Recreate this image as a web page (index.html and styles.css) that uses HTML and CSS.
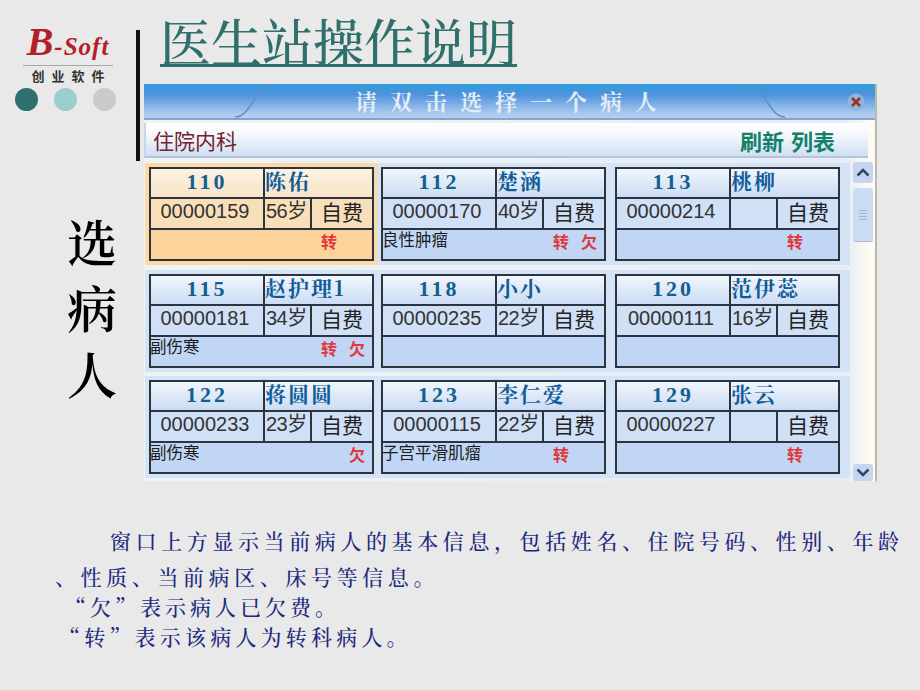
FILE: index.html
```html
<!DOCTYPE html>
<html lang="zh-CN">
<head>
<meta charset="utf-8">
<title>医生站操作说明</title>
<link rel="stylesheet" href="styles.css">
</head>
<body>
<div class="slide">
  <div class="top">
    <aside class="aside">
      <div class="logo">
        <div class="brand"><span class="brand-b">B</span>-Soft</div>
        <div class="brand-cn">创业软件</div>
      </div>
      <div class="dots"><i class="dot dot-a"></i><i class="dot dot-b"></i><i class="dot dot-c"></i></div>
      <div class="vtext"><span>选</span><span>病</span><span>人</span></div>
    </aside>
    <div class="rule"></div>
    <main class="main">
      <h1 class="title">医生站操作说明</h1>
      <section class="window">
        <header class="titlebar">
          <svg class="curve curve-l" width="38" height="34" viewBox="0 0 38 34"><path d="M0 33 C16 33 20 3 36 0" fill="none" stroke="#5f8fc0" stroke-width="1.5"/></svg>
          <svg class="curve curve-r" width="38" height="34" viewBox="0 0 38 34"><path d="M2 0 C18 3 22 33 38 33" fill="none" stroke="#5f8fc0" stroke-width="1.5"/></svg>
          <span class="wtitle">请双击选择一个病人</span>
          <svg class="close" width="18" height="18" viewBox="0 0 18 18"><circle cx="9" cy="9" r="8.5" fill="#8fb4dc"/><path d="M5 5 L13 13 M13 5 L5 13" stroke="#9c3028" stroke-width="2.6"/></svg>
        </header>
        <div class="toolbar">
          <span class="dept">住院内科</span>
          <span class="actions">刷新 列表</span>
        </div>
        <div class="body">
          <div class="grid">
            <div class="cell cell-on"><div class="card card-on"><div class="num">110</div><div class="name">陈佑</div><div class="pid">00000159</div><div class="age">56岁</div><div class="pay">自费</div><div class="note"><span class="diag"></span><span class="marks"><b>转</b><b></b></span></div></div></div>
            <div class="cell"><div class="card"><div class="num">112</div><div class="name">楚涵</div><div class="pid">00000170</div><div class="age">40岁</div><div class="pay">自费</div><div class="note"><span class="diag">良性肿瘤</span><span class="marks"><b>转</b><b>欠</b></span></div></div></div>
            <div class="cell"><div class="card"><div class="num">113</div><div class="name">桃柳</div><div class="pid">00000214</div><div class="age"></div><div class="pay">自费</div><div class="note"><span class="diag"></span><span class="marks"><b>转</b><b></b></span></div></div></div>
            <div class="cell"><div class="card"><div class="num">115</div><div class="name">赵护理1</div><div class="pid">00000181</div><div class="age">34岁</div><div class="pay">自费</div><div class="note"><span class="diag">副伤寒</span><span class="marks"><b>转</b><b>欠</b></span></div></div></div>
            <div class="cell"><div class="card"><div class="num">118</div><div class="name">小小</div><div class="pid">00000235</div><div class="age">22岁</div><div class="pay">自费</div><div class="note"><span class="diag"></span><span class="marks"><b></b><b></b></span></div></div></div>
            <div class="cell"><div class="card"><div class="num">120</div><div class="name">范伊蕊</div><div class="pid">00000111</div><div class="age">16岁</div><div class="pay">自费</div><div class="note"><span class="diag"></span><span class="marks"><b></b><b></b></span></div></div></div>
            <div class="cell"><div class="card"><div class="num">122</div><div class="name">蒋圆圆</div><div class="pid">00000233</div><div class="age">23岁</div><div class="pay">自费</div><div class="note"><span class="diag">副伤寒</span><span class="marks"><b></b><b>欠</b></span></div></div></div>
            <div class="cell"><div class="card"><div class="num">123</div><div class="name">李仁爱</div><div class="pid">00000115</div><div class="age">22岁</div><div class="pay">自费</div><div class="note"><span class="diag">子宫平滑肌瘤</span><span class="marks"><b>转</b><b></b></span></div></div></div>
            <div class="cell"><div class="card"><div class="num">129</div><div class="name">张云</div><div class="pid">00000227</div><div class="age"></div><div class="pay">自费</div><div class="note"><span class="diag"></span><span class="marks"><b>转</b><b></b></span></div></div></div>
          </div>
          <div class="scrollbar">
            <div class="sb-btn sb-up"><svg width="14" height="9" viewBox="0 0 14 9"><path d="M1.5 7.5 L7 2 L12.5 7.5" fill="none" stroke="#33465f" stroke-width="2.5"/></svg></div>
            <div class="sb-thumb"><i></i><i></i><i></i><i></i></div>
            <div class="sb-btn sb-down"><svg width="14" height="9" viewBox="0 0 14 9"><path d="M1.5 1.5 L7 7 L12.5 1.5" fill="none" stroke="#33465f" stroke-width="2.5"/></svg></div>
          </div>
        </div>
      </section>
    </main>
  </div>
  <div class="desc">
    <p class="d1">窗口上方显示当前病人的基本信息，包括姓名、住院号码、性别、年龄<br>、性质、当前病区、床号等信息。</p>
    <p class="d2">“欠”表示病人已欠费。</p>
    <p class="d3">“转”表示该病人为转科病人。</p>
  </div>
</div>
</body>
</html>
```
FILE: styles.css
```css
* { box-sizing: border-box; }
html, body { margin: 0; padding: 0; }
body {
  width: 920px;
  height: 690px;
  overflow: hidden;
  background: #e9e9e9;
  font-family: "Noto Serif CJK SC", "Noto Sans CJK SC", "Liberation Serif", serif;
}
.slide { display: flex; flex-direction: column; width: 920px; height: 690px; }
.top { display: flex; height: 481px; }

.aside { width: 136px; display: flex; flex-direction: column; flex: none; padding-top: 23px; }
.logo { margin-left: 23px; width: 90px; }
.brand {
  font: italic bold 25px/37px "Liberation Serif", serif;
  color: #b3202a;
  border-bottom: 1px solid #a8a8a8;
  white-space: nowrap;
  text-align: center;
  letter-spacing: 1px;
}
.brand-b { font-size: 40px; line-height: 37px; }
.brand-cn {
  font: bold 13px/19px "Noto Sans CJK SC", sans-serif;
  color: #333;
  text-align: center;
  letter-spacing: 7px;
  margin-right: -7px;
}
.dots { display: flex; gap: 16px; margin: 3px 0 0 15px; }
.dot { width: 23px; height: 23px; border-radius: 50%; display: block; }
.dot-a { background: #2f6f70; }
.dot-b { background: #9acfd0; }
.dot-c { background: #cbcbcb; }
.vtext {
  display: flex; flex-direction: column; align-items: center;
  margin: 96px 0 0 66px;
  width: 52px;
  font-size: 50px; line-height: 66px; font-weight: 600; color: #000;
}

.rule { width: 4px; height: 131px; margin-top: 30px; background: #111; flex: none; }

.main { margin-left: 4px; flex: none; width: 733px; display: flex; flex-direction: column; }
.title {
  margin: 10px 0 0 16px;
  height: 60px;
  font-size: 51px; line-height: 60px; font-weight: 500;
  color: #2f6f6c;
  text-decoration: underline;
  text-decoration-thickness: 3px;
  text-underline-offset: 2px;
  white-space: nowrap;
}
.window {
  margin-top: 14px;
  flex: 1;
  display: flex; flex-direction: column;
  background: linear-gradient(90deg, #f0f3f4, #e6edf5 96%, #fdfbf2 99%);
  border-right: 2px solid #b9b9ae;
}
.titlebar {
  position: relative;
  height: 36px;
  flex: none;
  display: flex; align-items: center; justify-content: center;
  background: linear-gradient(180deg, #2f9cdc 0%, #4d92dc 30%, #a7c8ee 85%, #b7cfee 100%);
  border-bottom: 2px solid #8f9fd6;
}
.wtitle {
  margin-left: 6px;
  font: bold 22px/30px "Noto Serif CJK SC", "Noto Sans CJK SC", sans-serif;
  letter-spacing: 13px;
  color: #e4edf5;
}
.curve { position: absolute; bottom: 0; }
.curve-l { left: 91px; }
.curve-r { right: 90px; }
.close { position: absolute; right: 10px; top: 9px; }
.toolbar {
  margin-top: 3px;
  height: 35px;
  flex: none;
  margin-right: 7px;
  padding: 0 33px 0 7px;
  display: flex; align-items: center; justify-content: space-between;
  background: linear-gradient(180deg, #ffffff 0%, #f2f6fb 40%, #cfdff2 100%);
  border-bottom: 2px solid #b5c4dc;
  border-left: 2px solid #c6d6ea;
}
.dept { font: 400 21px/30px "Noto Sans CJK SC", sans-serif; color: #74202f; }
.actions { font: bold 22px/30px "Noto Sans CJK SC", sans-serif; color: #14806a; word-spacing: 2px; }

.body { display: flex; margin-top: 5px; flex: 1; min-height: 0; }
.grid {
  width: 708px;
  flex: none;
  margin-left: 1px;
  display: grid;
  grid-template-columns: 232px 234px 239px;
  grid-auto-rows: 102px;
  row-gap: 4.5px;
}
.cell {
  padding: 4px;
  background: #d4e3f6;
}
.cell-on { background: #fcd9a6; }
.card {
  width: 225px;
  height: 94px;
  padding: 2px;
  display: grid;
  grid-template-columns: 112px 45px 60px;
  grid-template-rows: 28px 29px 29px;
  gap: 2px;
  background: #2c3440;
  --h: linear-gradient(180deg, #f1f6fc, #cbdcf3);
  --m: #d0e0f6;
  --n: #c1d6f4;
}
.card-on {
  --h: linear-gradient(180deg, #fdf2e2, #f8e3c6);
  --m: #f9dfb9;
  --n: #fcd39a;
}
.num, .name { background: var(--h); }
.pid, .age, .pay { background: var(--m); }
.num {
  text-align: center;
  font: bold 22px/25px "Liberation Serif", serif;
  letter-spacing: 3px;
  color: #135f90;
}
.name {
  grid-column: span 2;
  padding-left: 0;
  font: bold 21px/22px "Noto Serif CJK SC", "Noto Sans CJK SC", sans-serif;
  letter-spacing: 2px;
  color: #0f5c99;
  white-space: nowrap;
}
.pid, .age {
  font: 400 20px/25px "Liberation Sans", "Noto Sans CJK SC", sans-serif;
  color: #333;
  white-space: nowrap;
}
.pid { text-align: center; padding-right: 4px; }
.age { letter-spacing: -.5px; padding-left: 1px; font-family: "Liberation Sans", "Noto Sans CJK SC", sans-serif; }
.pay {
  text-align: center;
  font: 400 21px/24px "Noto Sans CJK SC", sans-serif;
  color: #222;
}
.note {
  grid-column: span 3;
  background: var(--n);
  display: flex; justify-content: space-between; align-items: flex-start;
}
.diag {
  font: 400 16.5px/18px "Noto Sans CJK SC", sans-serif;
  color: #1c1c1c;
  margin-left: -1px;
  white-space: nowrap;
}
.marks { display: flex; gap: 12px; margin: 1px 7px 0 0; }
.marks b {
  display: block; width: 16px; height: 20px;
  font: bold 16px/20px "Noto Sans CJK SC", sans-serif;
  color: #e0383c;
}

.scrollbar {
  width: 20px; margin-top: -1px; flex: none;
  display: flex; flex-direction: column; align-items: stretch;
}
.sb-btn {
  height: 21px;
  display: flex; align-items: center; justify-content: center;
  background: #c3d5f0; border-radius: 3px;
}
.sb-thumb {
  margin-top: 5px;
  height: 54px;
  display: flex; flex-direction: column; align-items: center; justify-content: center; gap: 2px;
  background: #ccdcf4; border-radius: 3px;
  border-bottom: 1px solid #a9b9d3;
}
.sb-thumb i { display: block; width: 8px; height: 1px; background: #a7b5cc; }
.sb-down { margin-top: auto; height: 17px; }

.desc {
  padding: 41px 0 0 55px;
  color: #1d2a80;
  font-size: 21px;
  font-weight: 500;
  white-space: nowrap;
}
.desc p { margin: 0; }
.d1 { text-indent: 55px; line-height: 36px; letter-spacing: 4.6px; }
.d2 { line-height: 30px; padding-left: 10px; letter-spacing: 4px; margin-top: -3px !important; }
.d3 { line-height: 30px; padding-left: 4px; letter-spacing: 4.2px; }
```
